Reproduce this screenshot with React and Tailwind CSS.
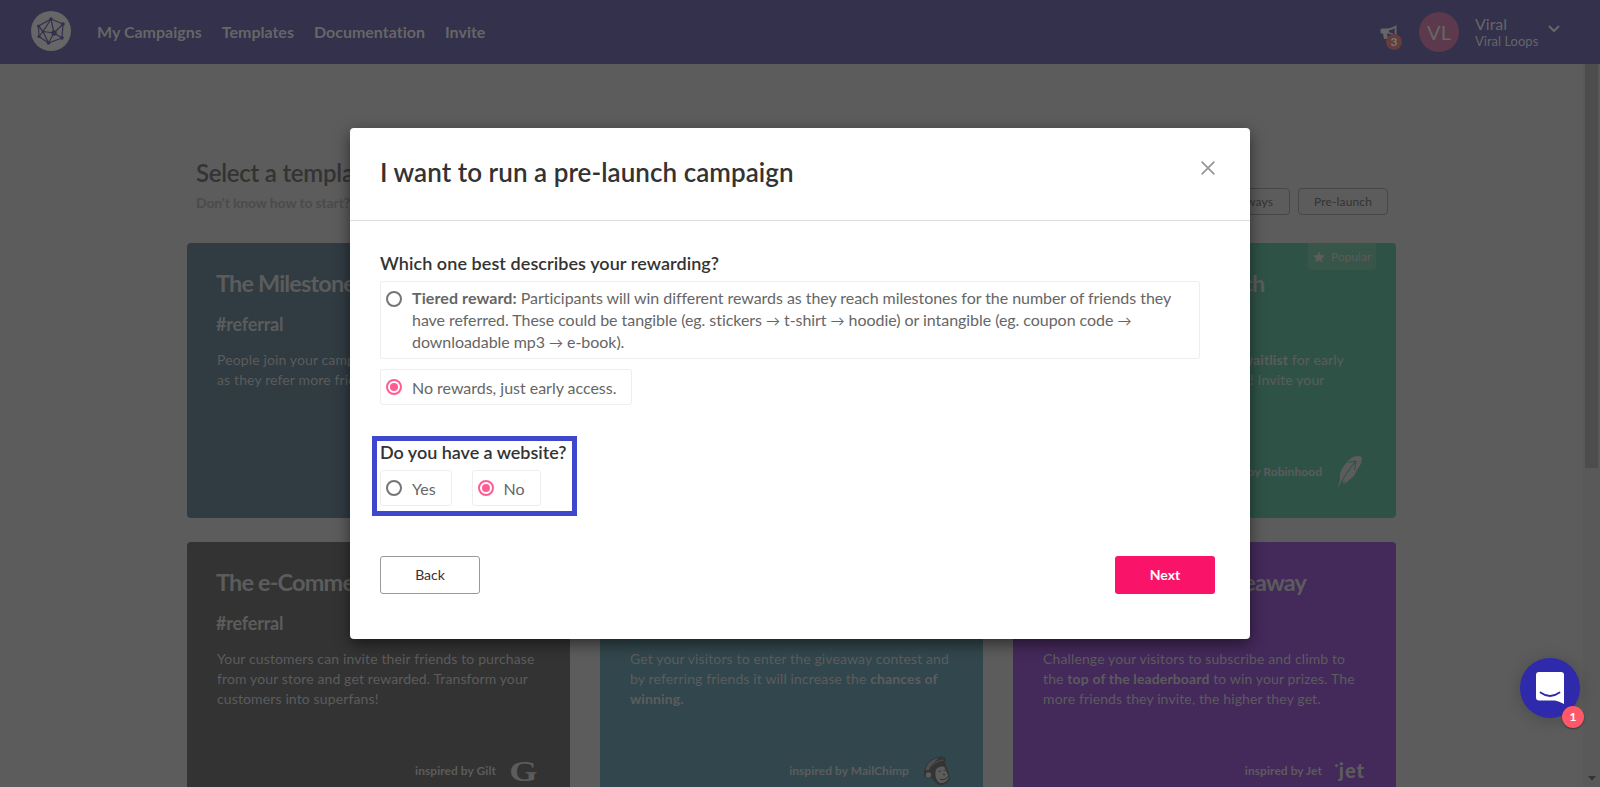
import React, { useState } from 'react';

const templates = [
    {
        title: 'The Milestone Referral',
        tag: '#referral',
        color: 'bg-[#303b42]',
        text: <>People join your campaign and get rewarded<br />as they refer more friends to you.</>,
        brand: 'Dropbox',
        logo: null,
    },
    {
        title: 'The Altruistic Referral',
        tag: '#referral',
        color: 'bg-[#32474d]',
        text: <>Reward both sides of the referral.</>,
        brand: 'Airbnb',
        logo: null,
    },
    {
        title: 'The Startup Pre-launch',
        tag: '#prelaunch',
        color: 'bg-[#2e5346]',
        text: <>Have guests join your exclusive <b>waitlist</b> for early<br />access to your great new product! Invite your</>,
        brand: 'Robinhood',
        logo: 'feather',
        popular: true,
    },
    {
        title: 'The e-Commerce Referral',
        tag: '#referral',
        color: 'bg-[#333333]',
        text: <>Your customers can invite their friends to purchase from your store and get rewarded. Transform your customers into superfans!</>,
        brand: 'Gilt',
        logo: 'gilt',
    },
    {
        title: 'The Tempting Giveaway',
        tag: '#giveaway',
        color: 'bg-[#32474d]',
        text: <>Get your visitors to enter the giveaway contest and by referring friends it will increase the <b>chances of winning.</b></>,
        brand: 'MailChimp',
        logo: 'mailchimp',
    },
    {
        title: 'The Leaderboard Giveaway',
        tag: '#giveaway',
        color: 'bg-[#44295b]',
        text: <>Challenge your visitors to subscribe and climb to the <b>top of the leaderboard</b> to win your prizes. The more friends they invite, the higher they get.</>,
        brand: 'Jet',
        logo: 'jet',
    },
];

function Logo() {
    return (
        <svg width="40" height="40" viewBox="0 0 40 40" fill="none">
            <circle cx="20" cy="20" r="20" fill="#666666" />
            <g stroke="#33314c" strokeWidth="1.2" strokeLinejoin="round">
                <path d="M20 8 L32 13 L31 27 L17.5 32 L8 25.5 L7.5 15 Z" />
                <path d="M20 8 L12 20.5 L17.5 32 L23 22 L20 8 M7.5 15 L12 20.5 L8 25.5 M32 13 L23 22 L31 27 M12 20.5 L23 22" />
            </g>
            <g fill="#33314c">
                <circle cx="20" cy="8" r="1.8" />
                <circle cx="32" cy="13" r="1.8" />
                <circle cx="31" cy="27" r="1.8" />
                <circle cx="17.5" cy="32" r="1.8" />
                <circle cx="8" cy="25.5" r="1.6" />
                <circle cx="7.5" cy="15" r="1.6" />
                <circle cx="23" cy="22" r="2.7" />
                <circle cx="12" cy="20.5" r="1.5" />
            </g>
        </svg>
    );
}

function BrandLogo({ name }) {
    switch (name) {
        case 'feather':
            return (
                <svg width="26" height="34" viewBox="0 0 26 34">
                    <path d="M3 19 C4 14 8 9 12 5 C16 1 21 0 24.500 2 C26 6 23 11 20 15 L17 21 L11 26 L4.500 27 L2.500 32 L1 32 L3 24 Z" fill="#5c5c5c" />
                    <path d="M19 6 L11 7.500 M19 6 L17.500 15 M19 6 C12 14 7 21 2 32" stroke="#2e5346" strokeWidth="1.100" fill="none" />
                    <path d="M6 28.500 L11 26.500" stroke="#5c5c5c" strokeWidth="1" />
                </svg>
            );
        case 'gilt':
            return <span className="-ml-px scale-x-[1.25] font-['Liberation_Serif',serif] text-[29px] leading-none font-bold">G</span>;
        case 'mailchimp':
            return (
                <svg width="28" height="30" viewBox="0 0 28 30">
                    <path d="M1 18 C1 9 7 2 18 .500 C22 0 23 1.500 22 6 L23.500 11 L26 17 L27 23 C24 29 17 31 13 27 L9 22 L5 22.500 L1 20 Z" fill="#343434" />
                    <path d="M2.500 14 C4 7 9 3 16 2 C13 5 8 8 6 14 Z" fill="#505050" />
                    <path d="M9 9.500 C12 6.500 16 4.500 20.500 4" stroke="#505050" strokeWidth="1" fill="none" />
                    <path d="M13 13.500 C15 11 19 10 21.500 11 L23 15 L24.500 18 L26 21 C24 27 18 28.500 15 25.500 C12 22 12 17 13 13.500 Z" fill="#5c5c5c" />
                    <circle cx="5.500" cy="19" r="2.700" fill="#5c5c5c" />
                    <path d="M15.500 15.500 L18 15 M20.500 14.500 L22 14.500 M17 23 C20 24.500 24 23 25.500 20 M20 18 L22 19" stroke="#343434" strokeWidth="1.100" fill="none" />
                </svg>
            );
        case 'jet':
            return (
                <span className="relative -top-px left-[2px] font-['Lato',sans-serif] text-xl leading-none font-black tracking-[1px]">
                    jet
                    <span className="absolute top-[4px] -left-[4px] h-[3px] w-[3px] rounded-full bg-[#5c5c5c]" />
                </span>
            );
        default:
            return null;
    }
}

function TemplateCard({ template }) {
    return (
        <div className={`relative flex h-[275px] flex-col rounded px-[30px] pt-[25px] text-[#5c5c5c] ${template.color}`}>
            {template.popular && (
                <div className="absolute top-0 right-5 flex h-[27px] w-[68px] items-center rounded-b bg-[#375549] pl-[5px] text-xs">
                    <svg className="mr-1.5" width="12" height="12" viewBox="0 0 12 12" fill="currentColor">
                        <path d="M6 .2 L7.800 3.900 L11.900 4.500 L8.900 7.400 L9.600 11.500 L6 9.600 L2.400 11.500 L3.100 7.400 L.1 4.500 L4.200 3.900 Z" />
                    </svg>
                    Popular
                </div>
            )}
            <h3 className="-ml-px text-[23.5px] leading-[30px] font-bold tracking-[-0.85px] whitespace-nowrap">{template.title}</h3>
            <h4 className="mt-[15px] -ml-px text-lg leading-[22px] font-bold tracking-[-0.2px]">{template.tag}</h4>
            <p className="mt-[15px] w-[325px] text-sm leading-5 tracking-[0.13px]">{template.text}</p>
            <div className="absolute bottom-[28px] left-0 flex h-9 w-[361px] items-center justify-end text-xs font-bold tracking-[0.05px]">
                <span>inspired by {template.brand}</span>
                <span className="ml-1 flex w-12 shrink-0 items-center justify-center">
                    <BrandLogo name={template.logo} />
                </span>
            </div>
        </div>
    );
}

function Header() {
    return (
        <header className="flex h-16 items-center bg-[#33314c] text-[#666666]">
            <div className="-mt-0.5 ml-[31px]">
                <Logo />
            </div>
            <nav className="ml-[26px] flex gap-5 text-base font-bold">
                <span>My Campaigns</span>
                <span>Templates</span>
                <span>Documentation</span>
                <span>Invite</span>
            </nav>
            <div className="relative ml-auto h-10 w-[22px]">
                <svg className="mt-[13px]" width="18" height="15" viewBox="0 0 18 15" fill="currentColor">
                    <path d="M16.500 0 V13 L14.500 12 C12 9.500 10 8.500 7 8.500 L8 14 H4 L3 8.500 H1.500 L.5 7.500 V4.500 L1.500 3.500 H7 C10 3.500 13 2 16.500 0 Z M14.700 2.900 C12.500 4.400 10.500 5 9 5.200 V7.200 C11.500 7.600 13.300 8.600 14.700 10 Z" fillRule="evenodd" />
                </svg>
                <span className="absolute top-[22px] left-[6px] flex h-4 w-4 items-center justify-center rounded-full bg-[#643d3d] text-[12px] font-bold text-[#777777]">3</span>
            </div>
            <div className="ml-[17px] flex h-10 w-10 items-center justify-center rounded-full bg-[#5c394c] text-xl">VL</div>
            <div className="ml-4 w-[73px]">
                <div className="text-base leading-[17px]">Viral</div>
                <div className="pt-px text-[13px] leading-[16px] whitespace-nowrap">Viral Loops</div>
            </div>
            <svg className="-mt-1.5 mr-10 ml-0" width="12" height="8" viewBox="0 0 12 8" fill="none">
                <path d="M1 1 L6 6 L11 1" stroke="#666666" strokeWidth="2.200" />
            </svg>
        </header>
    );
}

function Radio({ checked }) {
    return (
        <span className={`flex h-4 w-4 shrink-0 items-center justify-center rounded-full border-2 ${checked ? 'border-[#ff5c93]' : 'border-[#757575]'}`}>
            {checked && <span className="h-2 w-2 rounded-full bg-[#ff5c93]" />}
        </span>
    );
}

function Option({ label, checked, onClick }) {
    return (
        <button onClick={onClick} className="flex h-9 items-start rounded-[3px] border border-[#eeeeee] pt-[9px] pr-[15px] pl-[5px]">
            <Radio checked={checked} />
            <span className="ml-[10px] text-base leading-[18px] tracking-[-0.02px]">{label}</span>
        </button>
    );
}

function Arrow() {
    return <span className="text-sm leading-none">→</span>;
}

function CampaignModal() {
    const [reward, setReward] = useState('none');
    const [website, setWebsite] = useState('no');

    return (
        <div className="h-[511px] w-[900px] rounded bg-white text-[#666666] shadow-[0_5px_15px_rgba(0,0,0,0.5)]">
            <div className="flex h-[93px] items-start justify-between border-b border-[#dddddd] pt-[28px] pr-[35px] pl-[30px]">
                <h2 className="text-[26px] leading-8 font-semibold tracking-[0.05px] text-[#333333]">I want to run a pre-launch campaign</h2>
                <svg className="mt-[5px]" width="14" height="14" viewBox="0 0 14 14" fill="none">
                    <path d="M.7 .7 L13.300 13.300 M13.300 .7 L.7 13.300" stroke="#999999" strokeWidth="1.800" />
                </svg>
            </div>
            <div className="px-[30px] pt-[31px]">
                <h3 className="text-lg leading-[22px] font-semibold tracking-[0.07px] text-[#333333]">Which one best describes your rewarding?</h3>
                <button
                    onClick={() => setReward('tiered')}
                    className="mt-[7px] flex h-[78px] w-[820px] items-start rounded-[3px] border border-[#eeeeee] pt-[5px] pl-[5px] text-left"
                >
                    <span className="mt-1"><Radio checked={reward === 'tiered'} /></span>
                    <span className="ml-[10px] w-[775px] text-base leading-[22px] tracking-[-0.05px]">
                        <b className="tracking-[0.1px]">Tiered reward:</b> Participants will win different rewards as they reach milestones for the number of friends they have referred. These could be tangible (eg. stickers <Arrow /> t-shirt <Arrow /> hoodie) or intangible (eg. coupon code <Arrow /> downloadable mp3 <Arrow /> e-book).
                    </span>
                </button>
                <div className="mt-[10px] flex">
                    <Option label="No rewards, just early access." checked={reward === 'none'} onClick={() => setReward('none')} />
                </div>
                <div className="mt-[31px] -ml-2 h-[80px] w-[205px] border-5 border-[#3f48cc] pl-[3px]">
                    <h3 className="text-lg leading-[22px] font-semibold tracking-[-0.03px] whitespace-nowrap text-[#333333]">Do you have a website?</h3>
                    <div className="mt-[7px] flex gap-5">
                        <Option label="Yes" checked={website === 'yes'} onClick={() => setWebsite('yes')} />
                        <Option label="No" checked={website === 'no'} onClick={() => setWebsite('no')} />
                    </div>
                </div>
                <div className="mt-10 flex justify-between pr-[5px] text-sm">
                    <button className="h-[38px] w-[100px] rounded-[3px] border border-[#999999] text-[#333333]">Back</button>
                    <button className="h-[38px] w-[100px] rounded-[3px] bg-[#fa1469] font-bold text-white">Next</button>
                </div>
            </div>
        </div>
    );
}

function ChatLauncher() {
    return (
        <div className="absolute right-5 bottom-[69px] flex h-[60px] w-[60px] items-center justify-center rounded-full bg-[#2e2aab] shadow-[0_2px_16px_rgba(0,0,0,0.2)]">
            <svg width="28" height="32" viewBox="0 0 28 32" fill="none">
                <path d="M3 0 H25 Q28 0 28 3 V32 Q23 29 19 28.500 H3 Q0 28.500 0 25.500 V3 Q0 0 3 0 Z" fill="#ffffff" />
                <path d="M4.500 20.500 Q14 27.500 23.500 20.500" stroke="#2e2aab" strokeWidth="1.800" strokeLinecap="round" />
            </svg>
            <span className="absolute -right-1 -bottom-[10px] flex h-[22px] w-[22px] items-center justify-center rounded-full bg-[#ff5869] text-xs font-bold text-white shadow-[0_1px_2px_rgba(0,0,0,0.4)]">1</span>
        </div>
    );
}

export default function App() {
    return (
        <div className="relative flex h-screen w-full flex-col overflow-hidden bg-[#5c5c5c] font-['Lato',sans-serif] [font-variant-ligatures:none]">
            <Header />
            <div className="flex min-h-0 flex-1">
                <main className="flex-1 overflow-hidden">
                    <div className="mx-auto w-[1209px]">
                        <div className="flex h-[179px] items-start justify-between pt-[92px] pr-2 pl-[9px]">
                            <div>
                                <h1 className="text-2xl leading-[34px] font-semibold tracking-[-0.25px] text-[#333333]">Select a template</h1>
                                <p className="mt-1 text-sm leading-[18px] font-bold tracking-[-0.15px] text-[#4b4b4b]">Don't know how to start?</p>
                            </div>
                            <div className="mt-8 flex gap-2 text-xs tracking-[0.15px] text-[#333333]">
                                <span className="flex h-[27px] items-center rounded border border-[#474747] px-4">Giveaways</span>
                                <span className="flex h-[27px] w-[90px] items-center justify-center rounded border border-[#474747]">Pre-launch</span>
                            </div>
                        </div>
                        <div className="grid grid-cols-[383px_383px_383px] gap-x-[30px] gap-y-6">
                            {templates.map((template) => (
                                <TemplateCard key={template.title} template={template} />
                            ))}
                        </div>
                    </div>
                </main>
                {/* Scrollbar */}
                <div className="flex w-[17px] flex-col items-center justify-between bg-[#595959] pb-1.5">
                    <div className="h-[404px] w-[13px] bg-[#4d4d4d]" />
                    <svg width="8" height="5" viewBox="0 0 8 5">
                        <path d="M0 0 H8 L4 4.500 Z" fill="#333333" />
                    </svg>
                </div>
            </div>

            {/* Modal layer */}
            <div className="absolute inset-0 flex items-start justify-center pt-32">
                <CampaignModal />
            </div>
            <ChatLauncher />
        </div>
    );
}
